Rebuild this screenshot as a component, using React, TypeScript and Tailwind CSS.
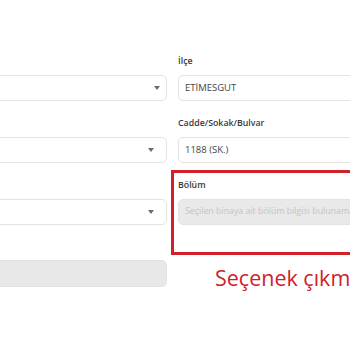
import React from "react";

const font = { fontFamily: '"Open Sans", "Liberation Sans", sans-serif' };

function Chevron({ offset }: { offset: string }) {
  return (
    <span className={`absolute top-1/2 -translate-y-1/2 ${offset} w-0 h-0 border-l-[3px] border-r-[3px] border-t-[4px] border-l-transparent border-r-transparent border-t-[#6b6b6b]`} />
  );
}

function SelectBox({ offset }: { offset: string }) {
  return (
    <div className="relative h-[26px] rounded-[5px] border border-[#e3e3e3] bg-white">
      <Chevron offset={offset} />
    </div>
  );
}

function Label({ text }: { text?: string }) {
  return (
    <div className="h-[12px] leading-[12px] mb-[8px] text-[8.8px] font-semibold text-[#3a3a3a]">
      {text ?? ""}
    </div>
  );
}

export default function App() {
  return (
    <div className="w-[350px] h-[350px] overflow-hidden relative bg-white" style={font}>
      <div className="flex gap-[11px] -ml-[20px] pt-[55px]">
        <div className="w-[187px] shrink-0 flex flex-col">
          <Label />
          <SelectBox offset="right-[6px]" />
          <div className="h-[16px]" />
          <Label />
          <SelectBox offset="right-[12px]" />
          <div className="h-[16px]" />
          <Label />
          <SelectBox offset="right-[12px]" />
          <div className="h-[35px]" />
          <div className="h-[27px] rounded-[5px] bg-[#e8e8e8] border border-[#e3e3e3]" />
        </div>
        <div className="w-[220px] shrink-0 flex flex-col">
          <Label text="İlçe" />
          <div className="h-[26px] rounded-[5px] border border-[#e3e3e3] bg-white flex items-center px-[6px] text-[9.5px] text-[#444]">
            ETİMESGUT
          </div>
          <div className="h-[16px]" />
          <Label text="Cadde/Sokak/Bulvar" />
          <div className="h-[26px] rounded-[5px] border border-[#e3e3e3] bg-white flex items-center px-[6px] text-[9.5px] text-[#444]">
            1188 (SK.)
          </div>
          <div className="h-[16px]" />
          <Label text="Bölüm" />
          <div className="h-[26px] rounded-[5px] border border-[#e3e3e3] bg-[#e9e9e9] flex items-center px-[6px] text-[8.8px] text-[#c4c4c4] whitespace-nowrap overflow-hidden">
            Seçilen binaya ait bölüm bilgisi bulunamadı
          </div>
          <div className="h-[35px]" />
          <div className="h-[27px] pl-[37px] pt-[4px] text-[21.5px] leading-[27px] text-[#d0202a] whitespace-nowrap">
            Seçenek çıkmıyor
          </div>
        </div>
      </div>
      <div className="absolute left-[171px] top-[170px] w-[200px] h-[85px] border-[3px] border-[#d0202a] pointer-events-none" />
    </div>
  );
}
